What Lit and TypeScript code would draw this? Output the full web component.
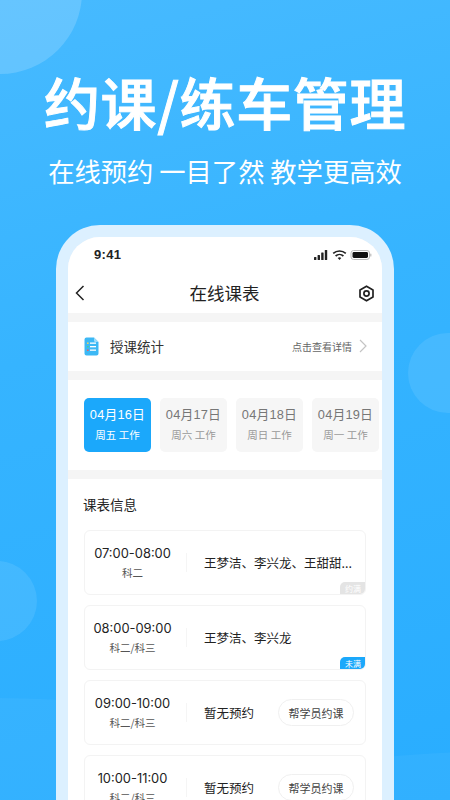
import { LitElement, html, css, svg } from "lit";
import { customElement } from "lit/decorators.js";

const dates = [
  { d: "04月16日", s: "周五 工作", on: true },
  { d: "04月17日", s: "周六 工作" },
  { d: "04月18日", s: "周日 工作" },
  { d: "04月19日", s: "周一 工作" },
];
const rows = [
  { t: "07:00-08:00", k: "科二", n: "王梦洁、李兴龙、王甜甜...", tag: "约满", full: true },
  { t: "08:00-09:00", k: "科二/科三", n: "王梦洁、李兴龙", tag: "未满" },
  { t: "09:00-10:00", k: "科二/科三", n: "暂无预约", btn: true },
  { t: "10:00-11:00", k: "科二/科三", n: "暂无预约", btn: true },
];

@customElement("app-root")
export class AppRoot extends LitElement {
  static styles = css`
    :host {
      display: block;
      width: 450px;
      height: 800px;
      overflow: hidden;
      position: relative;
      font-family: "Noto Sans CJK SC", "Liberation Sans", sans-serif;
      background: linear-gradient(165deg, #47baff 0%, #36b4ff 40%, #29adff 100%);
      color: #222;
    }
    * { box-sizing: border-box; }
    .blob { position: absolute; border-radius: 50%; background: rgba(255,255,255,.09); }
    .b1 { width: 164px; height: 164px; left: -82px; top: -90px; background: rgba(255,255,255,.17); }
    .b2 { width: 80px; height: 80px; left: 408px; top: 333px; }
    .b3 { width: 80px; height: 80px; left: -43px; top: 561px; }
    .b4 { width: 700px; height: 260px; left: -350px; top: 698px; background: rgba(255,255,255,.04); }
    .b5 { width: 900px; height: 200px; left: 100px; top: 750px; background: rgba(255,255,255,.04); }
    .page { position: relative; display: flex; flex-direction: column; align-items: center; height: 800px; }
    h1 {
      margin: 66px 0 0; height: 70px; font-size: 56px; line-height: 70px; font-weight: 500;
      -webkit-text-stroke: 1px #fff;
      color: #fff; white-space: nowrap; letter-spacing: 0.6px;
    }
    .sub {
      margin-top: 15px; height: 40px; font-size: 26.3px; line-height: 40px; color: #fff; font-weight: 400;
      white-space: pre;
    }
    .phone {
      margin-top: 34px; width: 338px; height: 600px; flex: none;
      border: 12px solid #dcf0ff; border-bottom: 0; border-radius: 44px 44px 0 0;
      background: #f5f5f5; overflow: hidden; display: flex; flex-direction: column; gap: 9px;
    }
    .top { background: #fff; height: 76px; flex: none; display: flex; flex-direction: column; }
    .status { height: 34px; padding: 1px 10px 0 26px; display: flex; justify-content: space-between; align-items: center; }
    .time { font: 600 13px "Liberation Sans", sans-serif; color: #222; letter-spacing: .3px; }
    .nav { flex: 1; display: grid; grid-template-columns: 1fr auto 1fr; align-items: center; padding: 2px 7px 0 6px; }
    .nav svg:last-child { justify-self: end; }
    .nav .title { font-size: 17.5px; line-height: 24px; color: #222; }
    .stat { background: #fff; height: 49px; flex: none; display: flex; align-items: center; padding: 0 15px 1px 16px; }
    .stat .lab { margin-left: 11px; font-size: 13.5px; color: #333; flex: 1; }
    .stat .more { font-size: 10px; color: #666; margin-right: 7px; }
    .dates { background: #fff; height: 90px; flex: none; display: flex; gap: 9px; padding: 18px 0 0 16px; overflow: hidden; }
    .date {
      width: 67px; height: 54px; flex: none; border-radius: 5px; background: #f6f6f6; color: #777;
      display: flex; flex-direction: column; align-items: center; padding-top: 7px;
    }
    .date.on { background: #1ba8fb; color: #fff; }
    .date b { font-weight: 400; font-size: 12.8px; line-height: 20px; font-family: "Liberation Sans", "Noto Sans CJK SC", sans-serif; letter-spacing: .2px; }
    .date span { font-size: 10.5px; line-height: 20px; color: #999; }
    .date.on span { color: #fff; }
    .list { background: #fff; flex: 1; padding: 15px 16px 0; display: flex; flex-direction: column; }
    .list h2 { margin: 0 0 15px -1px; font-size: 13.5px; line-height: 21px; font-weight: 400; color: #222; }
    .cards { display: flex; flex-direction: column; gap: 10px; }
    .card {
      position: relative; height: 65px; flex: none; border: 1.5px solid #f3f3f3; border-radius: 6px;
      display: flex; align-items: center; overflow: hidden; background: #fff;
    }
    .when { width: 98px; flex: none; text-align: center; padding-right: 3px; }
    .when b { display: block; font: 400 12.9px/19px Inter, "Liberation Sans", sans-serif; color: #222; white-space: nowrap; }
    .when span { display: block; margin-top: 2px; font-size: 10.5px; line-height: 16px; color: #555; }
    .sep { width: 1px; height: 19px; background: #f5f5f5; flex: none; margin-left: 3px; }
    .name { margin-left: 17px; font-size: 12.5px; color: #222; white-space: nowrap; flex: 1; }
    .btn {
      width: 76px; height: 27px; margin-right: 11px; border: 1.5px solid #f0f0f0; border-radius: 14px; flex: none;
      font-size: 11px; color: #444; display: flex; align-items: center; justify-content: center;
    }
    .tag {
      position: absolute; right: -1px; bottom: -1px; width: 26px; height: 13px; font-size: 8px; line-height: 13px;
      text-align: center; color: #fff; background: #1ba8fb; border-radius: 5px 0 5px 0;
    }
    .tag.full { background: #e4e4e4; }
  `;

  private docIcon() {
    return svg`<svg width="15" height="19" viewBox="0 0 15 19">
      <path d="M2.5 0.5H10L14.5 5V16.5a2 2 0 0 1-2 2H2.5a2 2 0 0 1-2-2V2.5a2 2 0 0 1 2-2Z" fill="#3cb8f5"/>
      <path d="M10 .5L14.5 5H11.5a1.5 1.5 0 0 1-1.5-1.5Z" fill="#9bdcfb"/>
      <rect x="3" y="5.5" width="1.6" height="1.4" fill="#ffd34d"/><rect x="6" y="5.5" width="6" height="1.3" fill="#fff"/>
      <rect x="3" y="9" width="1.6" height="1.4" fill="#4fd08a"/><rect x="6" y="9" width="6" height="1.3" fill="#fff"/>
      <rect x="3" y="12.5" width="1.6" height="1.4" fill="#f2555a"/><rect x="6" y="12.5" width="6" height="1.3" fill="#fff"/>
    </svg>`;
  }

  private statusIcons() {
    return svg`<svg width="58" height="12" viewBox="0 0 58 12">
      <g fill="#222"><rect x="0" y="8" width="2.4" height="3" rx=".5"/><rect x="3.6" y="6" width="2.4" height="5" rx=".5"/><rect x="7.2" y="3.5" width="2.4" height="7.5" rx=".5"/><rect x="10.8" y="1" width="2.4" height="10" rx=".5"/></g>
      <g fill="none" stroke="#222" stroke-width="1.7"><path d="M19.2 4.4a9.5 9.5 0 0 1 12.6 0"/><path d="M21.6 7a5.8 5.8 0 0 1 7.8 0"/></g>
      <path d="M23.7 9.1a2.6 2.6 0 0 1 3.6 0l-1.8 2Z" fill="#222"/>
      <rect x="37" y="1.5" width="18.5" height="9" rx="2.6" fill="none" stroke="#bbb" stroke-width="1"/>
      <rect x="38.5" y="3" width="15.5" height="6" rx="1.4" fill="#111"/>
      <rect x="56.2" y="4.5" width="1.2" height="3" rx=".6" fill="#bbb"/>
    </svg>`;
  }

  render() {
    return html`
      <div class="blob b1"></div><div class="blob b2"></div><div class="blob b3"></div><div class="blob b4"></div><div class="blob b5"></div>
      <div class="page">
        <h1>约课/练车管理</h1>
        <div class="sub">在线预约 一目了然 教学更高效</div>
        <div class="phone">
          <div class="top">
            <div class="status"><span class="time">9:41</span>${this.statusIcons()}</div>
            <div class="nav">
              <svg width="12" height="18" viewBox="0 0 12 18"><path d="M9.5 2L2.5 9l7 7" fill="none" stroke="#222" stroke-width="1.5"/></svg>
              <span class="title">在线课表</span>
              <svg width="17" height="17" viewBox="0 0 17 17"><path d="M8.5 1.2L15 4.9V12.1L8.5 15.8L2 12.1V4.9Z" fill="none" stroke="#222" stroke-width="1.7" stroke-linejoin="round"/><circle cx="8.5" cy="8.5" r="2.6" fill="none" stroke="#222" stroke-width="1.7"/></svg>
            </div>
          </div>
          <div class="stat">
            ${this.docIcon()}
            <span class="lab">授课统计</span>
            <span class="more">点击查看详情</span>
            <svg width="8" height="14" viewBox="0 0 8 14"><path d="M1 1l6 6-6 6" fill="none" stroke="#c4c4c4" stroke-width="1.2"/></svg>
          </div>
          <div class="dates">
            ${dates.map((x) => html`<div class="date ${x.on ? "on" : ""}"><b>${x.d}</b><span>${x.s}</span></div>`)}
          </div>
          <div class="list">
            <h2>课表信息</h2>
            <div class="cards">
              ${rows.map((r) => html`<div class="card">
                <div class="when"><b>${r.t}</b><span>${r.k}</span></div>
                <div class="sep"></div>
                <div class="name">${r.n}</div>
                ${r.btn ? html`<div class="btn">帮学员约课</div>` : ""}
                ${r.tag ? html`<div class="tag ${r.full ? "full" : ""}">${r.tag}</div>` : ""}
              </div>`)}
            </div>
          </div>
        </div>
      </div>
    `;
  }
}
